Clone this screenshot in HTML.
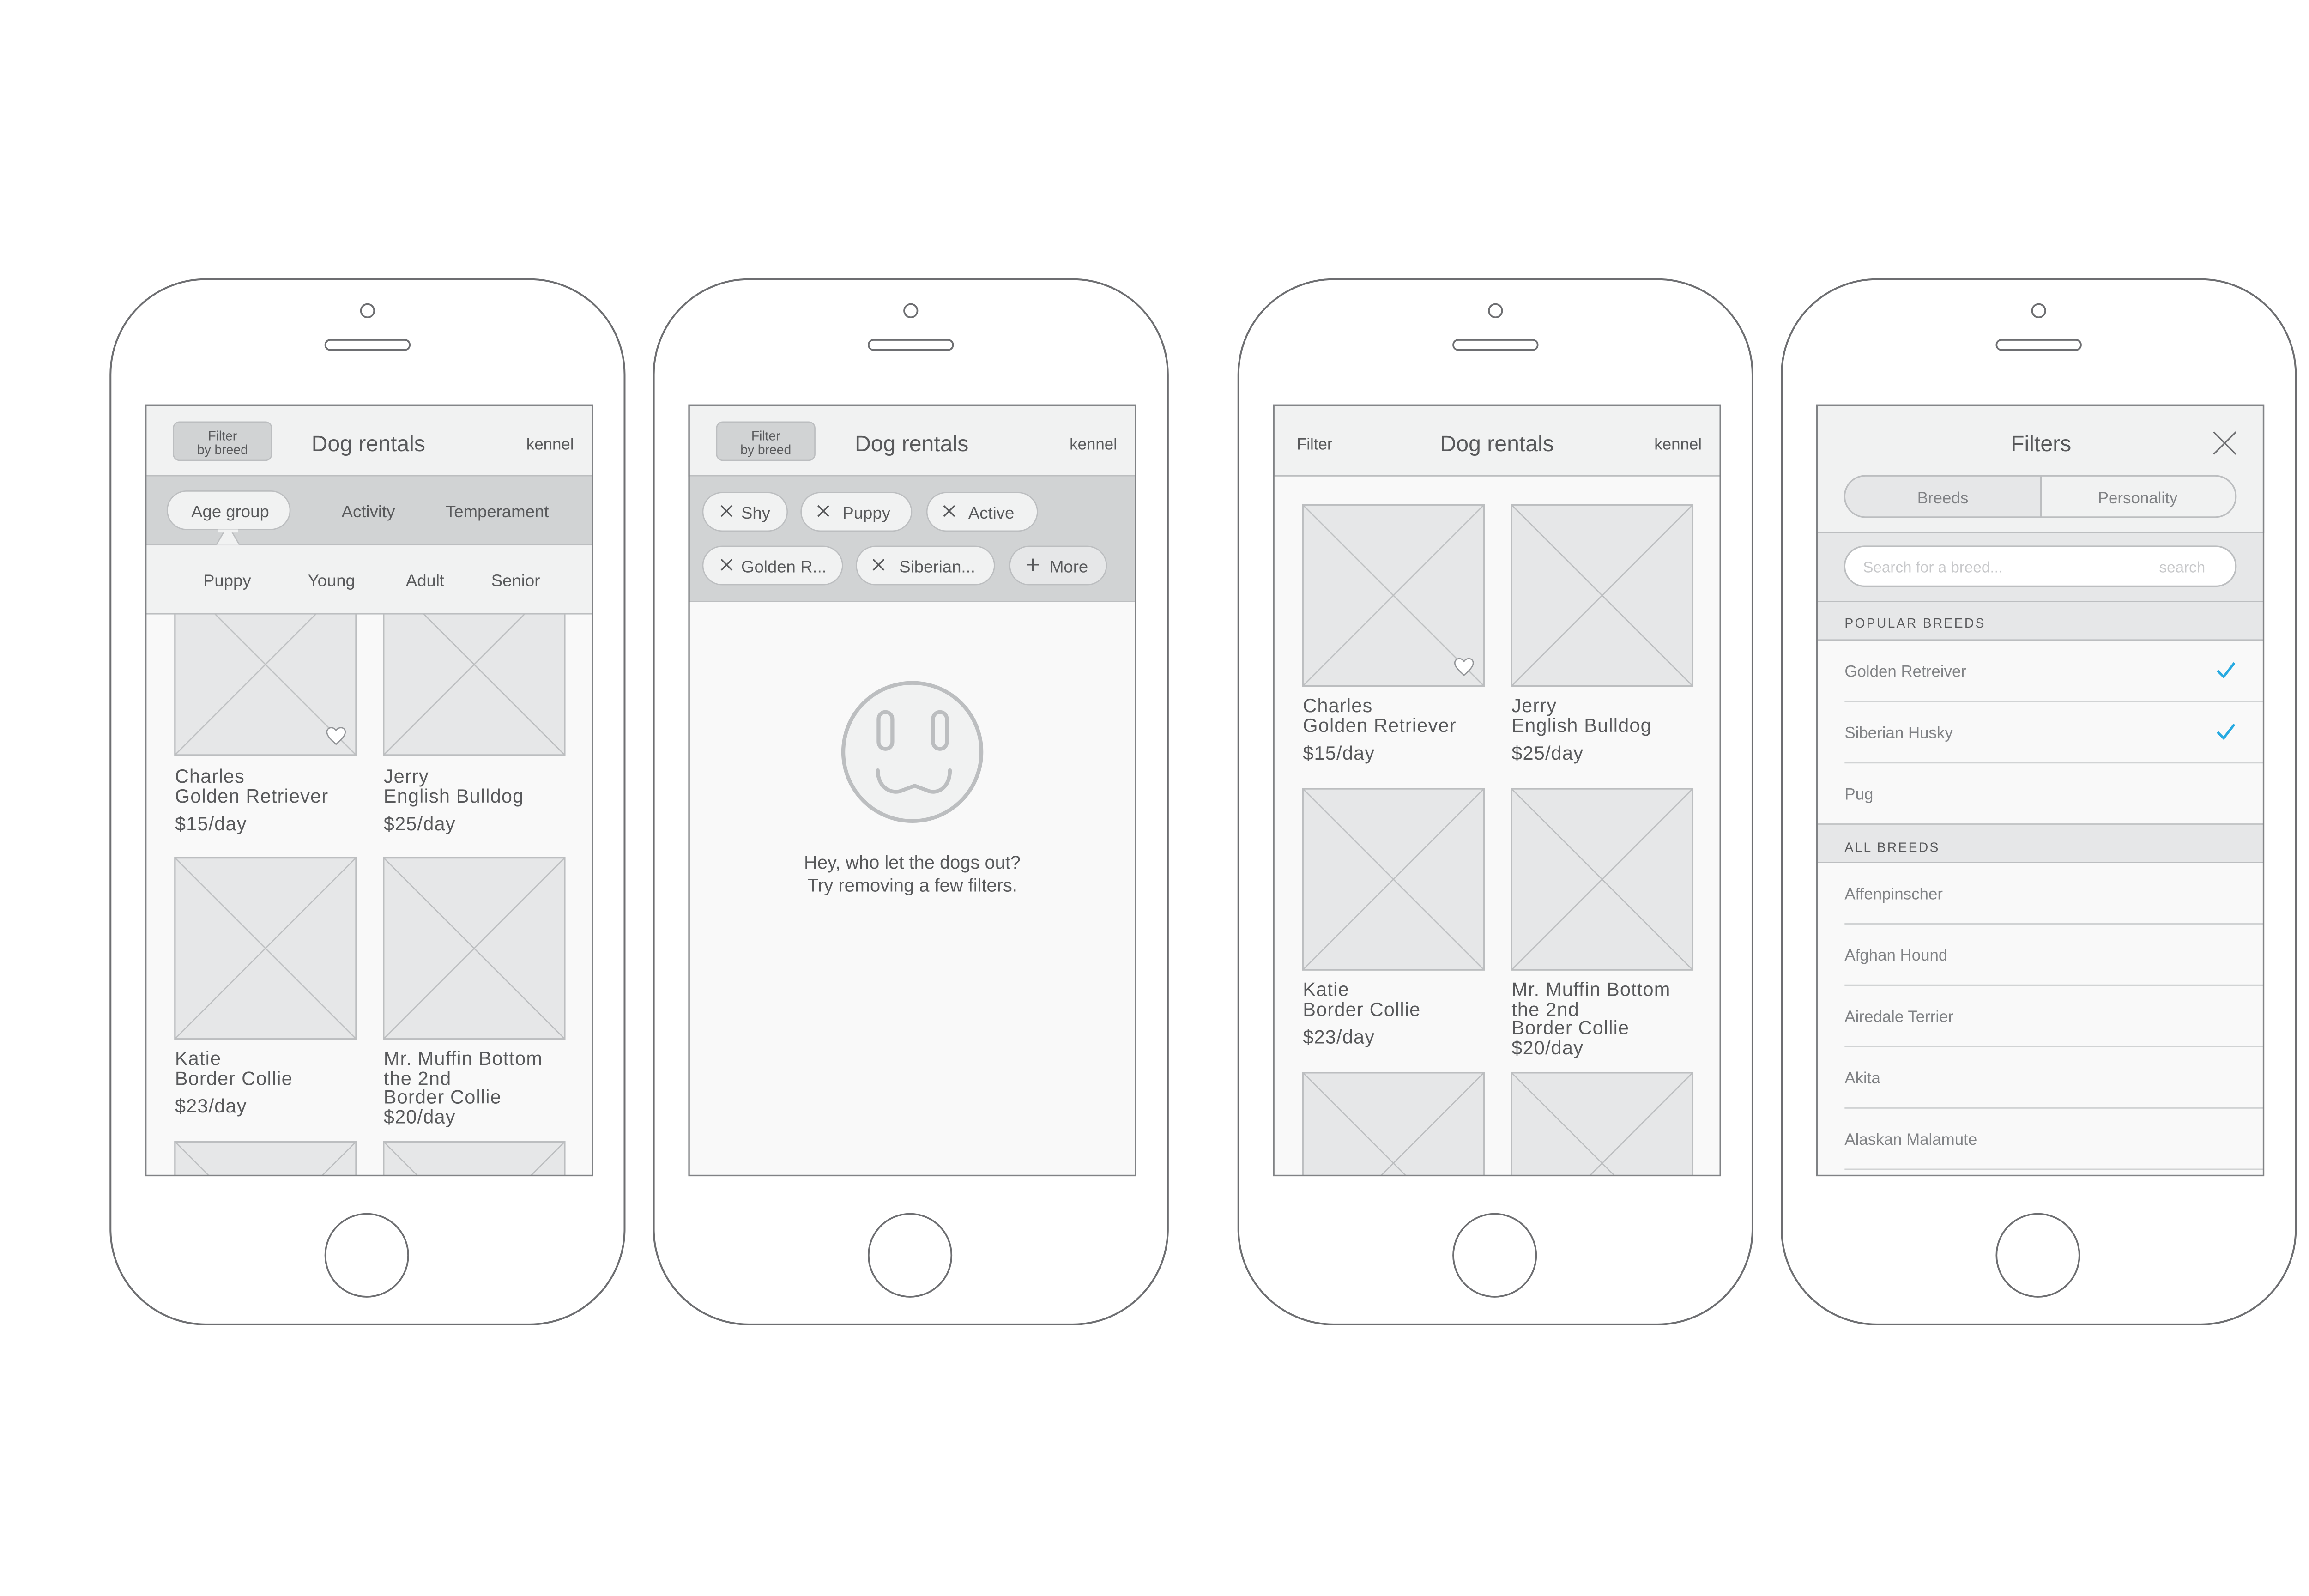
<!DOCTYPE html>
<html><head><meta charset="utf-8"><style>
html,body{margin:0;padding:0;background:#fff;}
svg{display:block;}
text{font-family:"Liberation Sans",sans-serif;fill:#58595b;}
.cap text{letter-spacing:0.35px;}
</style></head><body>
<svg width="5184" height="3456" viewBox="0 0 1560 1040" xmlns="http://www.w3.org/2000/svg">
<defs>
<g id="phone">
<rect x="72" y="182" width="335" height="681" rx="62" fill="#fff" stroke="#6d6e71" stroke-width="1.2"/>
<circle cx="239.5" cy="202.5" r="4.3" fill="none" stroke="#6d6e71" stroke-width="1.1"/>
<rect x="212" y="221.5" width="55" height="6.5" rx="3.2" fill="none" stroke="#6d6e71" stroke-width="1.1"/>
<circle cx="239" cy="818" r="27" fill="none" stroke="#6d6e71" stroke-width="1.1"/>
</g>
<g id="img"><rect x="0" y="0" width="118" height="118" fill="#e6e7e8" stroke="#bcbec0" stroke-width="1"/><path d="M0 0L118 118M118 0L0 118" stroke="#bcbec0" stroke-width="0.8"/></g>
<g id="heart"><path d="M0 5 C-2 3,-6 0,-6 -3 C-6 -6,-2 -7,0 -4 C2 -7,6 -6,6 -3 C6 0,2 3,0 5Z" fill="#fff" stroke="#939598" stroke-width="0.8"/></g>
<clipPath id="c1"><rect x="95" y="264" width="291" height="502"/></clipPath>
<clipPath id="c3"><rect x="830" y="264" width="291" height="502"/></clipPath>
</defs>

<use href="#phone"/>
<use href="#phone" x="354"/>
<use href="#phone" x="735"/>
<use href="#phone" x="1089"/>

<!-- Screen 1 -->
<g clip-path="url(#c1)">
<rect x="95" y="264" width="291" height="502" fill="#f9f9f9"/>
<use href="#img" x="114" y="374"/><use href="#img" x="250" y="374"/>
<use href="#heart" x="219" y="480"/>
<use href="#img" x="114" y="559"/><use href="#img" x="250" y="559"/>
<use href="#img" x="114" y="744"/><use href="#img" x="250" y="744"/>
</g>
<g font-size="12.5" class="cap">
<text x="114" y="510">Charles</text><text x="114" y="523">Golden Retriever</text><text x="114" y="541">$15/day</text>
<text x="250" y="510">Jerry</text><text x="250" y="523">English Bulldog</text><text x="250" y="541">$25/day</text>
<text x="114" y="694">Katie</text><text x="114" y="707">Border Collie</text><text x="114" y="725">$23/day</text>
<text x="250" y="694">Mr. Muffin Bottom</text><text x="250" y="707">the 2nd</text><text x="250" y="719">Border Collie</text><text x="250" y="732">$20/day</text>
</g>
<rect x="95" y="264" width="291" height="46" fill="#f1f2f2" stroke="#bcbec0" stroke-width="1"/>
<rect x="95" y="310" width="291" height="45" fill="#d1d3d4" stroke="#bcbec0" stroke-width="0.8"/>
<rect x="95" y="355" width="291" height="45" fill="#f1f2f2" stroke="#bcbec0" stroke-width="0.8"/>
<path d="M141 355 L148.5 342 L156 355" fill="#f1f2f2" stroke="#bcbec0" stroke-width="0.8"/>
<rect x="109" y="320" width="80" height="25" rx="12.5" fill="#f1f2f2" stroke="#bcbec0" stroke-width="0.8"/>
<path d="M142 346 L148.5 346 L155 346" stroke="#f1f2f2" stroke-width="2"/>
<rect x="113" y="275" width="64" height="25" rx="4" fill="#d1d3d4" stroke="#bcbec0" stroke-width="0.8"/>
<text x="145" y="287" font-size="8.5" text-anchor="middle">Filter</text>
<text x="145" y="296" font-size="8.5" text-anchor="middle">by breed</text>
<text x="203" y="294" font-size="14.5">Dog rentals</text>
<text x="343" y="293" font-size="10.5">kennel</text>
<g font-size="11" text-anchor="middle">
<text x="150" y="337">Age group</text><text x="240" y="337">Activity</text><text x="324" y="337">Temperament</text>
<text x="148" y="382">Puppy</text><text x="216" y="382">Young</text><text x="277" y="382">Adult</text><text x="336" y="382">Senior</text>
</g>
<rect x="95" y="264" width="291" height="502" fill="none" stroke="#808285" stroke-width="1"/>

<!-- Screen 2 -->
<rect x="449" y="264" width="291" height="502" fill="#f9f9f9"/>
<rect x="449" y="264" width="291" height="46" fill="#f1f2f2" stroke="#bcbec0" stroke-width="1"/>
<rect x="449" y="310" width="291" height="82" fill="#d1d3d4" stroke="#bcbec0" stroke-width="0.8"/>
<rect x="467" y="275" width="64" height="25" rx="4" fill="#d1d3d4" stroke="#bcbec0" stroke-width="0.8"/>
<text x="499" y="287" font-size="8.5" text-anchor="middle">Filter</text>
<text x="499" y="296" font-size="8.5" text-anchor="middle">by breed</text>
<text x="557" y="294" font-size="14.5">Dog rentals</text>
<text x="697" y="293" font-size="10.5">kennel</text>
<g fill="#f1f2f2" stroke="#bcbec0" stroke-width="0.8">
<rect x="458" y="321" width="55" height="25" rx="12.5"/>
<rect x="522" y="321" width="72" height="25" rx="12.5"/>
<rect x="604" y="321" width="72" height="25" rx="12.5"/>
<rect x="458" y="356" width="91" height="25" rx="12.5"/>
<rect x="558" y="356" width="90" height="25" rx="12.5"/>
<rect x="658" y="356" width="63" height="25" rx="12.5" fill="#e6e7e8"/>
</g>
<g stroke="#58595b" stroke-width="1" fill="none">
<path d="M470 329.5l7 7M477 329.5l-7 7"/>
<path d="M533 329.5l7 7M540 329.5l-7 7"/>
<path d="M615 329.5l7 7M622 329.5l-7 7"/>
<path d="M470 364.5l7 7M477 364.5l-7 7"/>
<path d="M569 364.5l7 7M576 364.5l-7 7"/>
<path d="M673 364v8M669 368h8"/>
</g>
<g font-size="11">
<text x="483" y="338">Shy</text><text x="549" y="338">Puppy</text><text x="631" y="338">Active</text>
<text x="483" y="373">Golden R...</text><text x="586" y="373">Siberian...</text><text x="684" y="373">More</text>
</g>
<circle cx="594.5" cy="490" r="45" fill="#f1f2f2" stroke="#bcbec0" stroke-width="2.5"/>
<g fill="none" stroke="#bcbec0" stroke-width="2.5" stroke-linecap="round">
<rect x="572.5" y="464" width="9" height="24" rx="4.5"/>
<rect x="608" y="464" width="9" height="24" rx="4.5"/>
<path d="M572 502 C572 514,582 518,588 515 L596 512 L604 515 C610 518,619 514,619 502"/>
</g>
<text x="594.5" y="566" font-size="12" text-anchor="middle">Hey, who let the dogs out?</text>
<text x="594.5" y="581" font-size="12" text-anchor="middle">Try removing a few filters.</text>
<rect x="449" y="264" width="291" height="502" fill="none" stroke="#808285" stroke-width="1"/>

<!-- Screen 3 -->
<g clip-path="url(#c3)">
<rect x="830" y="264" width="291" height="502" fill="#f9f9f9"/>
<use href="#img" x="849" y="329"/><use href="#img" x="985" y="329"/>
<use href="#heart" x="954" y="435"/>
<use href="#img" x="849" y="514"/><use href="#img" x="985" y="514"/>
<use href="#img" x="849" y="699"/><use href="#img" x="985" y="699"/>
</g>
<g font-size="12.5" class="cap">
<text x="849" y="464">Charles</text><text x="849" y="477">Golden Retriever</text><text x="849" y="495">$15/day</text>
<text x="985" y="464">Jerry</text><text x="985" y="477">English Bulldog</text><text x="985" y="495">$25/day</text>
<text x="849" y="649">Katie</text><text x="849" y="662">Border Collie</text><text x="849" y="680">$23/day</text>
<text x="985" y="649">Mr. Muffin Bottom</text><text x="985" y="662">the 2nd</text><text x="985" y="674">Border Collie</text><text x="985" y="687">$20/day</text>
</g>
<rect x="830" y="264" width="291" height="46" fill="#f1f2f2" stroke="#bcbec0" stroke-width="1"/>
<text x="845" y="293" font-size="10.5">Filter</text>
<text x="975.5" y="294" font-size="14.5" text-anchor="middle">Dog rentals</text>
<text x="1078" y="293" font-size="10.5">kennel</text>
<rect x="830" y="264" width="291" height="502" fill="none" stroke="#808285" stroke-width="1"/>

<!-- Screen 4 -->
<rect x="1184" y="264" width="291" height="502" fill="#f9f9f9"/>
<rect x="1184" y="264" width="291" height="83" fill="#f1f2f2" stroke="#bcbec0" stroke-width="1"/>
<text x="1330" y="294" font-size="14.5" text-anchor="middle">Filters</text>
<path d="M1442.5 281.5l14.5 14.5M1457 281.5l-14.5 14.5" stroke="#6d6e71" stroke-width="1"/>
<path d="M1330 310 H1215.5 a13.5 13.5 0 0 0 0 27 H1330Z" fill="#e6e7e8"/>
<rect x="1202" y="310" width="255" height="27" rx="13.5" fill="none" stroke="#bcbec0" stroke-width="1"/>
<line x1="1330" y1="310" x2="1330" y2="337" stroke="#bcbec0" stroke-width="1"/>
<text x="1266" y="328" font-size="10.5" text-anchor="middle" style="fill:#808285">Breeds</text>
<text x="1393" y="328" font-size="10.5" text-anchor="middle" style="fill:#808285">Personality</text>
<rect x="1184" y="347" width="291" height="45" fill="#e6e7e8" stroke="#bcbec0" stroke-width="0.8"/>
<rect x="1202" y="356" width="255" height="26" rx="13" fill="#fff" stroke="#bcbec0" stroke-width="1"/>
<text x="1214" y="373" font-size="10" style="fill:#c7c8ca">Search for a breed...</text>
<text x="1437" y="373" font-size="10" text-anchor="end" style="fill:#c7c8ca">search</text>
<rect x="1184" y="392" width="291" height="25" fill="#e6e7e8" stroke="#bcbec0" stroke-width="0.8"/>
<text x="1202" y="409" font-size="8.5" letter-spacing="1">POPULAR BREEDS</text>
<g font-size="10.5">
<text x="1202" y="441" style="fill:#808285">Golden Retreiver</text>
<text x="1202" y="481" style="fill:#808285">Siberian Husky</text>
<text x="1202" y="521" style="fill:#808285">Pug</text>
</g>
<g stroke="#d1d3d4" stroke-width="1">
<line x1="1202" y1="457" x2="1475" y2="457"/><line x1="1202" y1="497" x2="1475" y2="497"/>
<line x1="1202" y1="602" x2="1475" y2="602"/><line x1="1202" y1="642" x2="1475" y2="642"/>
<line x1="1202" y1="682" x2="1475" y2="682"/><line x1="1202" y1="722" x2="1475" y2="722"/>
<line x1="1202" y1="762" x2="1475" y2="762"/>
</g>
<path d="M1445 437l4 4 7-9M1445 477l4 4 7-9" fill="none" stroke="#27aae1" stroke-width="1.6"/>
<rect x="1184" y="537" width="291" height="25" fill="#e6e7e8" stroke="#bcbec0" stroke-width="0.8"/>
<text x="1202" y="555" font-size="8.5" letter-spacing="1">ALL BREEDS</text>
<g font-size="10.5">
<text x="1202" y="586" style="fill:#808285">Affenpinscher</text>
<text x="1202" y="626" style="fill:#808285">Afghan Hound</text>
<text x="1202" y="666" style="fill:#808285">Airedale Terrier</text>
<text x="1202" y="706" style="fill:#808285">Akita</text>
<text x="1202" y="746" style="fill:#808285">Alaskan Malamute</text>
</g>
<rect x="1184" y="264" width="291" height="502" fill="none" stroke="#808285" stroke-width="1"/>
</svg>
</body></html>
